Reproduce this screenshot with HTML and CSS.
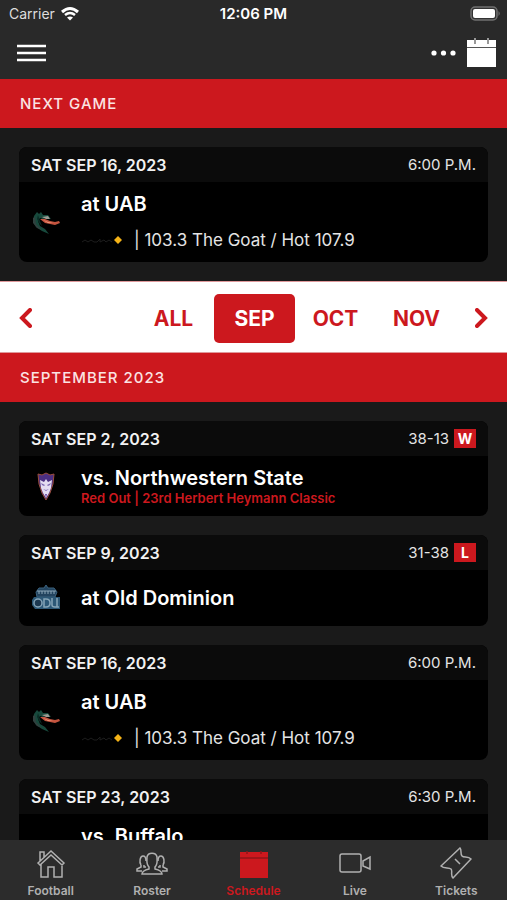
FILE: index.html
```html
<!DOCTYPE html>
<html lang="en">

<head>
    <meta charset="UTF-8">
    <meta name="viewport" content="width=device-width, initial-scale=1">
    <title>Football Schedule</title>
    <link rel="stylesheet" href="styles.css">
</head>

<body>
    <!-- shared team / network logos -->
    <svg class="defs" width="0" height="0" aria-hidden="true">
        <symbol id="logo-uab" viewBox="0 0 30 30">
            <path d="M3 9 L6 5 L8 7 L10 5 L12 8 L17 8 L20 12 L15 11 L12 12 L9 11 L7 14 L9 19 L14 22 L18 27 L11 24 L5 20 L2 14 Z" fill="#17493c" />
            <path d="M2 11 L4 10 L5 17 L11 23 L6 21 L2 16 Z" fill="#30403e" />
            <path d="M7 8 L9 14 L11 19 L8 16 L6 12 Z" fill="#0b2c25" />
            <path d="M11 10 L17 9 L19 12 L15 12 Z" fill="#9b9c94" />
            <path d="M9 12 L14 12 L19 14 L24 15 L28 14 L29 16 L24 18 L19 17 L14 16 Z" fill="#c4543f" />
            <path d="M12 13 L17 15 L22 16 L17 16 Z" fill="#ee9a7c" />
        </symbol>
        <symbol id="logo-nsu" viewBox="0 0 30 30">
            <path d="M7 3 L11 4 L15 2 L19 4 L23 3 L22 13 L19 22 L15 29 L11 22 L8 13 Z" fill="#4b2f83" stroke="#9a4e3d" />
            <path d="M9 9 L13 11 L15 8 L17 11 L21 9 L20 17 L18 22 L15 27 L12 22 L10 17 Z" fill="#e4dcf2" />
            <path d="M10 12 L14 14 L13 15 L11 14 Z M20 12 L16 14 L17 15 L19 14 Z M12 18 L15 19 L18 18 L15 20 Z" fill="#7d66b0" />
            <path d="M14 23 L16 23 L15 27 Z" fill="#6d4aa5" />
        </symbol>
        <symbol id="logo-odu" viewBox="0 0 30 30">
            <path d="M5 9 L8 5 L13 5 L15 2 L17 5 L23 5 L26 9 L24 14 L6 14 Z" fill="#23445f" stroke="#3a617d" />
            <path d="M6 8 H25 M8 8 V11 M11 8 V11 M14 8 V11 M17 8 V11 M20 8 V11 M23 8 V11" fill="none" stroke="#8fa9ba" />
            <path d="M3 14 H29 V26 H4 L1 22 V17 Z" fill="#2d5876" />
            <ellipse cx="7" cy="20" rx="4" ry="4" fill="#1c3850" stroke="#86a5b8" stroke-width="1.5" />
            <path d="M13 16 H15 Q19 16 19 20 Q19 24 15 24 H13 Z M21 15 V22 Q21 24 24 24 H28 M26 15 V24" fill="none" stroke="#86a5b8" stroke-width="1.5" />
        </symbol>
        <symbol id="logo-network" viewBox="0 0 42 12">
            <path d="M1 8 L4 6 L7 8 L10 6 L13 8 H16 L19 5 V8 L23 6 L25 8 L28 6 L31 8" fill="none" stroke="#1d1d1d" />
            <path d="M37 2 L39 4 L41 6 L39 8 L37 10 L35 8 L33 6 L35 4 Z" fill="#f5b317" />
        </symbol>
    </svg>

    <header class="topbar">
        <div class="status">
            <div class="carrier">
                <span>Carrier</span>
                <svg width="20" height="16" viewBox="0 0 20 16" aria-hidden="true">
                    <path d="M2 6 Q10 -1 18 6" fill="none" stroke="#fff" stroke-width="3" />
                    <path d="M5 9 Q10 5 15 9" fill="none" stroke="#fff" stroke-width="2.6" />
                    <path d="M7 11.5 Q10 9.3 13 11.5 L10 14.5 Z" fill="#fff" />
                </svg>
            </div>
            <div class="clock">12:06 PM</div>
            <svg class="battery" width="31" height="15" viewBox="0 0 31 15" aria-hidden="true">
                <rect x="1" y="1" width="26" height="13" rx="4" fill="#333" stroke="#707070" stroke-width="1.5" />
                <rect x="3" y="3" width="22" height="9" rx="2" fill="#fff" />
                <path d="M28.5 5 Q31 7.5 28.5 10 Z" fill="#707070" />
            </svg>
        </div>
        <div class="toolbar">
            <button type="button" class="icon-btn" aria-label="Menu">
                <svg width="30" height="20" viewBox="0 0 30 20">
                    <path d="M0 3 H29 M0 10 H29 M0 17 H29" stroke="#fff" stroke-width="2.5" />
                </svg>
            </button>
            <div class="tools">
                <button type="button" class="icon-btn" aria-label="More">
                    <svg width="26" height="6" viewBox="0 0 26 6" fill="#fff">
                        <circle cx="3" cy="3" r="2.6" />
                        <circle cx="12.5" cy="3" r="2.6" />
                        <circle cx="22" cy="3" r="2.6" />
                    </svg>
                </button>
                <button type="button" class="icon-btn" aria-label="Calendar">
                    <svg width="29" height="30" viewBox="0 0 29 30">
                        <path d="M0 2 H29 V29 H0 Z" fill="#fff" />
                        <path d="M0 9.5 H29" stroke="#555" />
                        <path d="M8 0 V6 M21 0 V6" stroke="#999" stroke-width="2" />
                    </svg>
                </button>
            </div>
        </div>
    </header>

    <main class="content">
        <h2 class="band">NEXT GAME</h2>
        <div class="games">
            <article class="card">
                <div class="card-head">
                    <h3 class="date">SAT SEP 16, 2023</h3>
                    <span class="time">6:00 P.M.</span>
                </div>
                <div class="card-body">
                    <svg class="logo"><use href="#logo-uab" /></svg>
                    <div>
                        <p class="team">at UAB</p>
                        <p class="radio"><svg class="network"><use href="#logo-network" /></svg>| 103.3 The Goat / Hot 107.9</p>
                    </div>
                </div>
            </article>
        </div>

        <nav class="months" aria-label="Months">
            <button type="button" class="arrow" aria-label="Previous">
                <svg width="13" height="20" viewBox="0 0 13 20"><path d="M11 2 L3 10 L11 18" /></svg>
            </button>
            <div class="month-list">
                <button type="button" class="month">ALL</button>
                <button type="button" class="month active">SEP</button>
                <button type="button" class="month">OCT</button>
                <button type="button" class="month">NOV</button>
            </div>
            <button type="button" class="arrow" aria-label="Next">
                <svg width="13" height="20" viewBox="0 0 13 20"><path d="M2 2 L10 10 L2 18" /></svg>
            </button>
        </nav>

        <h2 class="band">SEPTEMBER 2023</h2>
        <div class="games">
            <article class="card">
                <div class="card-head">
                    <h3 class="date">SAT SEP 2, 2023</h3>
                    <span class="time">38-13 <b class="result">W</b></span>
                </div>
                <div class="card-body">
                    <svg class="logo"><use href="#logo-nsu" /></svg>
                    <div>
                        <p class="team">vs. Northwestern State</p>
                        <p class="promo">Red Out | 23rd Herbert Heymann Classic</p>
                    </div>
                </div>
            </article>
            <article class="card">
                <div class="card-head">
                    <h3 class="date">SAT SEP 9, 2023</h3>
                    <span class="time">31-38 <b class="result">L</b></span>
                </div>
                <div class="card-body">
                    <svg class="logo"><use href="#logo-odu" /></svg>
                    <div>
                        <p class="team">at Old Dominion</p>
                    </div>
                </div>
            </article>
            <article class="card">
                <div class="card-head">
                    <h3 class="date">SAT SEP 16, 2023</h3>
                    <span class="time">6:00 P.M.</span>
                </div>
                <div class="card-body">
                    <svg class="logo"><use href="#logo-uab" /></svg>
                    <div>
                        <p class="team">at UAB</p>
                        <p class="radio"><svg class="network"><use href="#logo-network" /></svg>| 103.3 The Goat / Hot 107.9</p>
                    </div>
                </div>
            </article>
            <article class="card">
                <div class="card-head">
                    <h3 class="date">SAT SEP 23, 2023</h3>
                    <span class="time">6:30 P.M.</span>
                </div>
                <div class="card-body">
                    <div class="logo"></div>
                    <div>
                        <p class="team">vs. Buffalo</p>
                        <p class="radio"></p>
                    </div>
                </div>
            </article>
        </div>
    </main>

    <nav class="tabs" aria-label="Main">
        <a href="#" class="tab">
            <svg viewBox="0 0 32 32">
                <path d="M3 16 L16 4 L29 16 L27 18 L16 8 L5 18 Z M5 14 V5 H9 V10 M6 17 V30 H13 V20 H19 V30 H27 V17" />
            </svg>
            <span>Football</span>
        </a>
        <a href="#" class="tab">
            <svg viewBox="0 0 32 32">
                <path d="M13 20 C10 17 11 14 11 10 C12 5 20 5 21 10 C21 14 22 17 19 20 V22 C23 23 26 24 26 27 H6 C6 24 9 23 13 22 Z" />
                <path d="M10 20 H8 V18 M5 18 C3 15 4 9 7 9 C9 9 10 11 10 14 M5 18 V20 L1 22 V24 H6 M22 20 H24 V18 M27 18 C29 15 28 9 25 9 C23 9 22 11 22 14 M27 18 V20 L31 22 V24 H26" />
            </svg>
            <span>Roster</span>
        </a>
        <a href="#" class="tab active" aria-current="page">
            <svg viewBox="0 0 32 32">
                <path class="solid" d="M2 5 H30 V31 H2 Z" />
                <path class="cut" d="M2 11 H30 M9 4 V7 M23 4 V7" />
            </svg>
            <span>Schedule</span>
        </a>
        <a href="#" class="tab">
            <svg viewBox="0 0 32 32">
                <rect x="1" y="7" width="21" height="18" rx="2" />
                <path d="M24 14 L31 10 V22 L24 19 Z" />
            </svg>
            <span>Live</span>
        </a>
        <a href="#" class="tab">
            <svg viewBox="0 0 32 32">
                <path d="M20 1 C22 3 20 7 22 9 C24 11 28 9 31 12 L13 31 C10 28 13 24 11 22 C9 20 4 22 1 19 Z M15 12 L20 17" />
            </svg>
            <span>Tickets</span>
        </a>
    </nav>
</body>

</html>
```
FILE: styles.css
```css
* {
    padding: 0;
    margin: 0;
    box-sizing: border-box;
}

body {
    display: flex;
    flex-direction: column;
    height: 100vh;
    background-color: #1a1a1a;
    color: #fff;
    font-family: Inter, sans-serif;
}

button {
    border: 0;
    background: none;
    color: inherit;
    font-family: inherit;
    cursor: pointer;
}

svg {
    display: block;
}

.defs {
    position: absolute;
}

/* top bar */
.topbar {
    background-color: #292929;
}

.status {
    display: grid;
    grid-template-columns: 1fr auto 1fr;
    align-items: center;
    height: 27px;
    padding: 0 6px;
    font-size: 14px;
}

.carrier {
    display: flex;
    align-items: center;
    gap: 5px;
    padding-left: 3px;
    color: #ddd;
}

.clock {
    font-size: 15px;
    font-weight: 600;
}

.battery {
    justify-self: end;
}

.toolbar {
    display: flex;
    justify-content: space-between;
    align-items: center;
    height: 52px;
    padding: 0 11px 0 17px;
}

.tools {
    display: flex;
    align-items: center;
    gap: 10px;
}

/* section titles */
.band {
    padding: 0 20px;
    background-color: #cc181e;
    color: #fbe3e3;
    font-size: 15px;
    font-weight: 500;
    line-height: 49px;
    letter-spacing: 1px;
}

/* game cards */
.content {
    flex: 1;
    min-height: 0;
    overflow: hidden;
}

.games {
    display: flex;
    flex-direction: column;
    gap: 19px;
    padding: 19px;
}

.card {
    border-radius: 8px;
    background-color: #000;
    overflow: hidden;
}

.card-head {
    display: flex;
    justify-content: space-between;
    align-items: center;
    height: 35px;
    padding: 0 12px;
    background-color: #0b0b0b;
}

.date {
    font-size: 16px;
    font-weight: 600;
    color: #f2f2f2;
}

.time {
    display: flex;
    align-items: center;
    gap: 5px;
    font-size: 15px;
    color: #e4e4e4;
}

.result {
    width: 22px;
    background-color: #cc181e;
    color: #fff;
    font-size: 14px;
    line-height: 19px;
    text-align: center;
}

.card-body {
    display: flex;
    align-items: center;
    gap: 20px;
    min-height: 56px;
    padding: 10px 12px;
}

.logo {
    width: 30px;
    height: 30px;
}

.team {
    font-size: 20px;
    font-weight: 600;
    line-height: 24px;
}

.promo {
    color: #cc181e;
    font-size: 13px;
    font-weight: 600;
    line-height: 16px;
}

.radio {
    display: flex;
    align-items: center;
    gap: 11px;
    height: 24px;
    margin-top: 12px;
    font-size: 17px;
    color: #e4e4e4;
}

.network {
    width: 42px;
    height: 12px;
}

/* month picker */
.months {
    display: flex;
    justify-content: space-between;
    align-items: center;
    height: 72px;
    padding: 2px 19px 0;
    border-top: 1px solid #e0999b;
    border-bottom: 1px solid #e0999b;
    background-color: #fff;
    color: #cc181e;
}

.month-list {
    display: flex;
    margin-left: auto;
    margin-right: 18px;
}

.month {
    width: 81px;
    height: 49px;
    border-radius: 5px;
    font-size: 21px;
    font-weight: 700;
}

.month.active {
    background-color: #cc181e;
    color: #fff;
}

.arrow path {
    fill: none;
    stroke: #cc181e;
    stroke-width: 4;
    stroke-linecap: round;
}

/* bottom tabs */
.tabs {
    display: flex;
    height: 60px;
    background-color: #2c2c2c;
}

.tab {
    display: flex;
    flex: 1;
    flex-direction: column;
    align-items: center;
    gap: 4px;
    padding-top: 7px;
    color: #b0b0b0;
    font-size: 12px;
    font-weight: 600;
    line-height: 16px;
    text-decoration: none;
}

.tab svg {
    width: 32px;
    height: 32px;
    fill: none;
    stroke: #b0b0b0;
    stroke-width: 1.5;
}

.tab.active {
    color: #cc181e;
}

.tab .solid {
    fill: #cc181e;
    stroke: none;
}

.tab .cut {
    stroke: #8f1519;
}
```
